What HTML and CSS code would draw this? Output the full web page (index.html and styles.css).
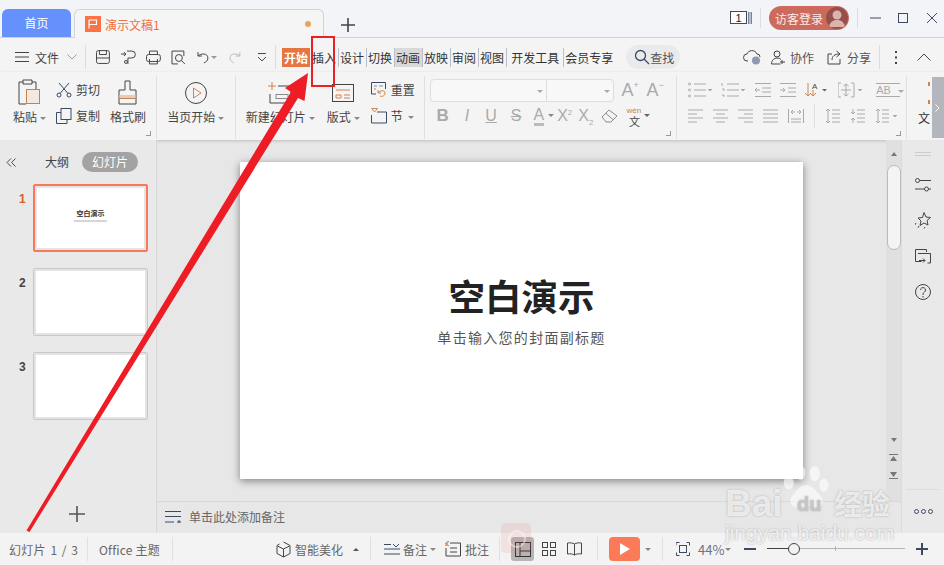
FILE: index.html
```html
<!DOCTYPE html>
<html lang="zh-CN">
<head>
    <meta charset="UTF-8">
    <title>演示文稿1</title>
    <link rel="stylesheet" href="styles.css">
</head>
<body>
    <div class="titlebar">
        <div class="tab-home">首页</div>
        <div class="tab-doc">
            <span class="doc-logo"><svg width="10" height="10" viewBox="0 0 10 10"><path d="M1 1h7.5v4.5H1M1 1v8.5" fill="none" stroke="#fff" stroke-width="1.2"/></svg></span>
            <span class="doc-name">演示文稿1</span>
            <span class="doc-dot"></span>
        </div>
        <svg class="tab-add" width="14" height="14" viewBox="0 0 14 14"><path d="M7 0v14M0 7h14" stroke="#444" stroke-width="1.6"/></svg>
        <div class="title-right">
            <svg width="22" height="14" viewBox="0 0 22 14"><rect x=".5" y=".5" width="16" height="12" fill="#fff" stroke="#3c4a66"/><text x="8.500" y="11" text-anchor="middle" font-size="11" font-family="Liberation Sans" fill="#222">1</text><path d="M18.500 1v12M20 1v12M21.500 1v12" stroke="#7b8496"/></svg>
            <span class="vsep first"></span>
            <div class="login">访客登录<span class="avatar"><svg width="22" height="22" viewBox="0 0 22 22"><circle cx="11" cy="8" r="4.500" fill="#dcb4ae"/><path d="M3 20c1-6 5-7 8-7s7 1 8 7z" fill="#dcb4ae"/></svg></span></div>
            <span class="vsep second"></span>
            <svg class="win-btn" width="14" height="14" viewBox="0 0 14 14"><path d="M0 7h11" stroke="#3c4a66"/></svg>
            <svg class="win-btn" width="14" height="14" viewBox="0 0 14 14"><rect x=".5" y="2.500" width="9" height="9" fill="none" stroke="#3c4a66"/></svg>
            <svg class="win-btn" width="14" height="14" viewBox="0 0 14 14"><path d="M1 2l10 10M11 2L1 12" stroke="#3c4a66"/></svg>
        </div>
    </div>

    <div class="menubar">
        <svg class="mi-burger" width="14" height="10" viewBox="0 0 14 10"><path d="M0 .5h14M0 5h14M0 9.500h14" stroke="#444"/></svg>
        <span class="file-label">文件</span>
        <svg class="mi-chev" width="10" height="6" viewBox="0 0 10 6"><path d="M.5.5L5 5 9.500.5" fill="none" stroke="#999"/></svg>
        <span class="menu-sep"></span>
        <div class="quick">
            <svg width="15" height="15" viewBox="0 0 15 15" fill="none" stroke="#444"><rect x=".5" y=".5" width="13" height="13" rx="2"/><path d="M3.500.5v4h7v-4M.5 8h13"/></svg>
            <svg width="15" height="15" viewBox="0 0 15 15" fill="none" stroke="#444"><path d="M0 4h5M3 2l2 2-2 2M6 1h5a3 3 0 0 1 0 7H7v6"/><circle cx="5" cy="12" r="1.500"/></svg>
            <svg width="15" height="15" viewBox="0 0 15 15" fill="none" stroke="#444"><rect x=".5" y="4.500" width="14" height="7" rx="2"/><path d="M3.500 4.500V1h8v3.500M3.500 9v5h8V9"/></svg>
            <svg width="15" height="15" viewBox="0 0 15 15" fill="none" stroke="#444"><path d="M13 6V1H1v13h6"/><circle cx="8" cy="8" r="3.500"/><path d="M10.500 10.500l3.500 3.500"/></svg>
            <svg class="undo" width="13" height="13" viewBox="0 0 13 13" fill="none" stroke="#444"><path d="M1 1v4h4M1 5c3-3 10-3 10 2 0 3-2 4-4 5"/></svg>
            <span class="caret gap-small"></span>
            <svg class="redo" width="13" height="13" viewBox="0 0 13 13" fill="none" stroke="#bbb"><path d="M12 1v4H8M12 5C9 2 2 2 2 7c0 3 2 4 4 5"/></svg>
            <svg class="more" width="10" height="9" viewBox="0 0 10 9" fill="none" stroke="#444"><path d="M1 .5h8M1 4l4 4 4-4"/></svg>
        </div>
        <span class="menu-sep"></span>
        <div class="tabs">
            <span class="tab is-start">开始</span>
            <span class="tab">插入</span>
            <span class="tab">设计</span>
            <span class="tab">切换</span>
            <span class="tab is-hover">动画</span>
            <span class="tab">放映</span>
            <span class="tab">审阅</span>
            <span class="tab">视图</span>
            <span class="tab is-wide">开发工具</span>
            <span class="tab is-last">会员专享</span>
        </div>
        <div class="find">
            <svg width="16" height="16" viewBox="0 0 16 16" fill="none" stroke="#3c4a66" stroke-width="1.300"><circle cx="6.500" cy="6.500" r="5"/><path d="M10 10l5 5"/></svg>
            查找
        </div>
        <div class="menu-right">
            <svg class="cloud" width="18" height="16" viewBox="0 0 18 16"><path d="M5 12H4a3.500 3.500 0 0 1 0-7c1-4 8-5 10 0a3 3 0 0 1 3 3" fill="none" stroke="#444"/><circle cx="13" cy="11.500" r="4" fill="#8d9ab3"/></svg>
            <svg class="collab" width="15" height="15" viewBox="0 0 15 15" fill="none" stroke="#444"><circle cx="6" cy="4" r="3"/><path d="M.5 14c0-4 3-6 5.500-6 1.500 0 3 .5 4 1.500M.5 14h9M11 10v4M9 12h5"/></svg>
            <span class="mr-text">协作</span>
            <svg class="share" width="16" height="15" viewBox="0 0 16 15" fill="none" stroke="#444"><path d="M5 4H1v10h12V9M5 10c0-4 3-6 7-6M9.500 1L13 4l-3.500 3"/></svg>
            <span class="mr-text">分享</span>
            <span class="menu-sep"></span>
            <svg class="dots" width="3" height="13" viewBox="0 0 3 13" fill="#444"><rect y="0" width="2" height="2"/><rect y="5.500" width="2" height="2"/><rect y="11" width="2" height="2"/></svg>
            <svg class="chev-up" width="14" height="8" viewBox="0 0 14 8"><path d="M.5 7.500L7 1l6.500 6.500" fill="none" stroke="#444"/></svg>
        </div>
    </div>

    <div class="ribbon">
        <div class="rgroup g-clip">
            <div class="big paste">
                <svg width="24" height="28" viewBox="0 0 24 28" fill="none"><path d="M5 3H1v22h7" stroke="#444"/><path d="M5 1h9v4H5zM14 3h4v7" stroke="#444"/><rect x="8.500" y="10.500" width="13" height="14" fill="#f3e9e1" stroke="#c9824f"/></svg>
                <span class="lbl">粘贴<i class="caret"></i></span>
            </div>
            <div class="pair">
                <div class="small">
                    <svg width="16" height="16" viewBox="0 0 16 16" fill="none" stroke="#3c4a66"><circle cx="3" cy="13" r="2"/><circle cx="13" cy="13" r="2"/><path d="M4 11.500L13 1M12 11.500L3 1"/></svg>
                    <span>剪切</span>
                </div>
                <div class="small">
                    <svg width="16" height="16" viewBox="0 0 16 16" fill="none" stroke="#3c4a66"><rect x="5" y=".5" width="10" height="11"/><path d="M5 4.500H.5v11H11v-4"/></svg>
                    <span>复制</span>
                </div>
            </div>
            <div class="big brush">
                <svg width="20" height="26" viewBox="0 0 20 26" fill="none"><path d="M7 1h5v9h6v14H1V10h6z" stroke="#444"/><rect x="1.500" y="15" width="16" height="3" fill="#e5cdb9"/><path d="M1 18.500h17" stroke="#c9824f"/></svg>
                <span class="lbl">格式刷</span>
            </div>
            <span class="launcher"></span>
        </div>
        <div class="rgroup g-play">
            <div class="big">
                <svg width="24" height="24" viewBox="0 0 24 24" fill="none"><circle cx="12" cy="12" r="10.500" stroke="#444"/><path d="M9.500 7l7.500 5-7.500 5z" stroke="#d2824c"/></svg>
                <span class="lbl">当页开始<i class="caret"></i></span>
            </div>
        </div>
        <div class="rgroup g-slide">
            <div class="big new-slide">
                <svg width="24" height="22" viewBox="0 0 24 22" fill="none"><path d="M4 0v8M0 4h8" stroke="#d2824c"/><path d="M10 4h13v17H2v-9" stroke="#444"/><rect x="8" y="12.500" width="12" height="4" stroke="#8a8a8a"/></svg>
                <span class="lbl">新建幻灯片<i class="caret"></i></span>
            </div>
            <div class="big layout">
                <svg width="22" height="18" viewBox="0 0 22 18" fill="none"><rect x=".5" y=".5" width="21" height="17" stroke="#444"/><path d="M4 6h14M4 11h5v3H4zM12 11h6M12 14h6" stroke="#d2824c"/></svg>
                <span class="lbl">版式<i class="caret"></i></span>
            </div>
            <div class="pair">
                <div class="small">
                    <svg width="16" height="16" viewBox="0 0 16 16" fill="none"><path d="M5 12H.5V.5h14V7" stroke="#3c4a66"/><path d="M3 4h3M8 4h4M3 7h2" stroke="#8a8a8a"/><path d="M7 11c2-3 7-3 7 0s-3 4-5 3M7 8v3h3" stroke="#d2824c"/></svg>
                    <span>重置</span>
                </div>
                <div class="small">
                    <svg width="16" height="16" viewBox="0 0 16 16" fill="none"><path d="M.5.5h6L3.500 4z" stroke="#d2824c"/><path d="M6 4h9.500v11H.5V7" stroke="#3c4a66"/></svg>
                    <span>节<i class="caret"></i></span>
                </div>
            </div>
        </div>
        <div class="rgroup g-font">
            <div class="frow combos">
                <div class="combo combo-name"><i class="caret"></i></div>
                <div class="combo combo-size"><i class="caret"></i></div>
                <span class="glyph grow-a">A<sup>+</sup></span>
                <span class="glyph grow-a">A<sup>−</sup></span>
            </div>
            <div class="frow font-row">
                <span class="fb bold">B</span>
                <span class="fb ital">I</span>
                <span class="fb under">U</span>
                <span class="fb strike">S</span>
                <span class="fb color">A<i class="caret"></i></span>
                <span class="fb script">X<sup>2</sup></span>
                <span class="fb script">X<sub>2</sub></span>
                <svg class="eraser" width="17" height="14" viewBox="0 0 17 14" fill="none" stroke="#8a8a8a"><path d="M1 8l7-7 8 6-6 6H5zM5 4.500l7 6"/></svg>
                <span class="wen"><b>wén</b>文<i class="caret"></i></span>
            </div>
            <span class="launcher"></span>
        </div>
        <div class="rgroup g-para">
            <div class="frow para-top">
                <svg width="24" height="16" viewBox="0 0 24 16" fill="none" stroke="#aaa"><path d="M6 2h12M6 8h12M6 14h12"/><circle cx="1.500" cy="2" r="1"/><circle cx="1.500" cy="8" r="1"/><circle cx="1.500" cy="14" r="1"/><path d="M20 7l2 2 2-2" fill="#aaa"/></svg>
                <svg width="24" height="16" viewBox="0 0 24 16" fill="none" stroke="#aaa"><path d="M6 2h12M6 8h12M6 14h12M1 1v3M1 7h2v2M1 13h2v2"/><path d="M20 7l2 2 2-2" fill="#aaa"/></svg>
                <svg width="16" height="16" viewBox="0 0 16 16" fill="none" stroke="#aaa"><path d="M0 1.500h16M7 6h9M7 10h9M0 14.500h16M5 8H0M2 6L0 8l2 2"/></svg>
                <svg width="16" height="16" viewBox="0 0 16 16" fill="none" stroke="#aaa"><path d="M0 1.500h16M8 6h8M8 10h8M0 14.500h16M0 8h5M3 6l2 2-2 2"/></svg>
                <svg width="24" height="16" viewBox="0 0 24 16" fill="none"><path d="M3 1v13M0 11l3 3 3-3M8 8v6M5 11l3 3 3-3" stroke="#d2824c"/><text x="7" y="7" font-size="8" fill="#444" font-family="Liberation Sans">A</text><path d="M17 7l2.500 2.500L22 7" fill="#666"/></svg>
                <svg width="26" height="16" viewBox="0 0 26 16" fill="none" stroke="#aaa"><path d="M3 1H0v14h3M13 1h3v14h-3M8 2v12M5.500 4L8 2l2.500 2M5.500 12L8 14l2.500-2M3 8h10"/><path d="M20 7l2 2 2-2" fill="#aaa"/></svg>
                <span class="ab">AB<i class="caret"></i></span>
            </div>
            <div class="frow para-bot">
                <svg width="15" height="14" viewBox="0 0 15 14" stroke="#aaa"><path d="M0 1h15M0 5h9M0 9h15M0 13h9"/></svg>
                <svg width="15" height="14" viewBox="0 0 15 14" stroke="#aaa"><path d="M0 1h15M3 5h9M0 9h15M3 13h9"/></svg>
                <svg width="15" height="14" viewBox="0 0 15 14" stroke="#aaa"><path d="M0 1h15M6 5h9M0 9h15M6 13h9"/></svg>
                <svg width="15" height="14" viewBox="0 0 15 14" stroke="#aaa"><path d="M0 1h15M0 5h15M0 9h15M0 13h15"/></svg>
                <svg width="16" height="14" viewBox="0 0 16 14" fill="none" stroke="#aaa"><path d="M.5 0v14M15.500 0v14M3 13h10M3 10h10M3 3h4M5 1L3 3l2 2M13 3H9M11 1l2 2-2 2"/></svg>
                <span class="para-sep"></span>
                <svg width="15" height="14" viewBox="0 0 15 14" fill="none" stroke="#aaa"><path d="M3 0v14M1 2l2-2 2 2M1 12l2 2 2-2M7 1h8M7 5h8M7 9h8M7 13h8"/></svg>
                <svg width="15" height="14" viewBox="0 0 15 14" fill="none" stroke="#aaa"><path d="M3 0v5M1 3l2 2 2-2M3 14V9M1 11l2-2 2 2M7 1h8M7 5h8M7 9h8M7 13h8"/></svg>
                <svg width="23" height="14" viewBox="0 0 23 14" fill="none" stroke="#aaa"><path d="M3 0v14M1 2l2-2 2 2M1 12l2 2 2-2M7 1h7M7 5h7M7 9h7M7 13h7"/><path d="M18 6l2 2 2-2" fill="#aaa"/></svg>
            </div>
            <span class="launcher"></span>
        </div>
        <div class="rgroup g-text">
            <span class="ticks"></span>
            <span class="lbl">文</span>
        </div>
        <div class="ribbon-more"><svg width="5" height="8" viewBox="0 0 5 8"><path d="M.5.5L4 4 .5 7.500" fill="none" stroke="#fff"/></svg></div>
    </div>

    <div class="main">
        <aside class="sidebar">
            <div class="side-head">
                <svg class="collapse" width="10" height="9" viewBox="0 0 10 9"><path d="M5 .5L1 4.500l4 4M9.500.5l-4 4 4 4" fill="none" stroke="#3c4a66"/></svg>
                <span class="side-outline">大纲</span>
                <span class="side-pill">幻灯片</span>
            </div>
            <div class="thumbs">
                <div class="thumb-row">
                    <span class="num is-current">1</span>
                    <div class="thumb is-current">
                        <div class="thumb-title">空白演示</div>
                        <div class="thumb-sub"></div>
                    </div>
                </div>
                <div class="thumb-row">
                    <span class="num">2</span>
                    <div class="thumb"></div>
                </div>
                <div class="thumb-row">
                    <span class="num">3</span>
                    <div class="thumb"></div>
                </div>
            </div>
            <svg class="add-slide" width="16" height="16" viewBox="0 0 16 16"><path d="M8 0v16M0 8h16" stroke="#555" stroke-width="1.600"/></svg>
        </aside>

        <div class="center">
            <div class="work">
                <div class="canvas">
                    <div class="slide">
                        <h1>空白演示</h1>
                        <p>单击输入您的封面副标题</p>
                    </div>
                </div>
                <div class="vscroll">
                    <span class="tri tri-up"></span>
                    <div class="thumb-bar"></div>
                    <div class="scroll-end">
                        <span class="tri tri-down"></span>
                        <svg width="9" height="10" viewBox="0 0 9 10" fill="#777"><path d="M0 1h9v1H0zM4.500 3L8 8H1z"/></svg>
                        <svg width="9" height="10" viewBox="0 0 9 10" fill="#777"><path d="M1 2h7L4.500 7zM0 8h9v1H0z"/></svg>
                    </div>
                </div>
            </div>
            <div class="notes">
                <svg width="16" height="12" viewBox="0 0 16 12" fill="none" stroke="#3c4a66"><path d="M0 .5h16M0 5.500h16M0 11h9M12 11h4M14 9v4"/></svg>
                <span>单击此处添加备注</span>
            </div>
        </div>

        <aside class="rail">
            <span class="grip"></span>
            <svg width="16" height="14" viewBox="0 0 16 14" fill="none" stroke="#444"><circle cx="2.500" cy="2.500" r="2"/><path d="M4.500 2.500H16M0 11h9"/><circle cx="11.500" cy="11" r="2"/><path d="M13.500 11H16"/></svg>
            <svg width="16" height="17" viewBox="0 0 16 17" fill="none" stroke="#444"><path d="M9 .5l2 4.500 4.500.5-3.500 3 1 4.500L9 11l-4 2.500 1-4.500-3-3 4.500-.5z"/><path d="M1 11l-1 2M4 14l-1.500 2.500M10 15l-1 1.500" stroke-dasharray="2 1"/></svg>
            <svg width="16" height="15" viewBox="0 0 16 15" fill="none" stroke="#444"><path d="M11.500 3V.5H.5v12h6M3 4.500h12.500v9.500h-3M4 11.500h6M8 9.500l2 2-2 2"/></svg>
            <svg width="16" height="16" viewBox="0 0 16 16" fill="none" stroke="#444"><circle cx="8" cy="8" r="7.500"/><path d="M5.500 6a2.500 2.500 0 1 1 3.800 2.200C8.400 8.800 8 9.500 8 11M8 12v1.500"/></svg>
            <div class="rail-foot"><i></i><i></i><i></i></div>
        </aside>
    </div>

    <div class="statusbar">
        <span class="st-item st-count">幻灯片 1 / 3</span>
        <span class="st-sep"></span>
        <span class="st-item st-theme">Office 主题</span>
        <span class="st-sep"></span>
        <div class="st-beauty">
            <svg width="15" height="17" viewBox="0 0 15 17" fill="none" stroke="#444"><path d="M7.500 1L14 4.500v8L7.500 16 1 12.500v-8L3.500 3M7.500 8v8M1.500 5l6 3 6-3"/></svg>
            <span>智能美化</span>
            <i class="caret-up"></i>
        </div>
        <span class="st-sep"></span>
        <div class="st-notes">
            <svg width="16" height="12" viewBox="0 0 16 12" fill="none" stroke="#3c4a66"><path d="M0 1.500h7M0 6h16M0 11h16M9 1l3 3 3-3"/></svg>
            <span>备注</span><i class="caret"></i>
            <svg class="comment" width="16" height="16" viewBox="0 0 16 16" fill="none"><path d="M5 2h10.500v13H1V7" stroke="#444"/><path d="M5 7h7M5 11h7" stroke="#444"/><path d="M0 2l4 3M4 0L0 5M2 0v5" stroke="#d2824c"/></svg>
            <span class="comment-label">批注</span>
        </div>
        <span class="st-sep"></span>
        <div class="views">
            <span class="view is-active"><svg width="16" height="15" viewBox="0 0 16 15" fill="none" stroke="#333"><rect x=".5" y=".5" width="15" height="14"/><path d="M5 .5v14M5 9h10.500"/></svg></span>
            <span class="view"><svg width="14" height="14" viewBox="0 0 14 14" fill="none" stroke="#444"><rect x=".5" y=".5" width="5" height="5"/><rect x="8.500" y=".5" width="5" height="5"/><rect x=".5" y="8.500" width="5" height="5"/><rect x="8.500" y="8.500" width="5" height="5"/></svg></span>
            <span class="view"><svg width="15" height="14" viewBox="0 0 15 14" fill="none" stroke="#444"><path d="M7.500 2C6 1 3 .5.500 1v11c3-.5 5.500 0 7 1 1.500-1 4-1.500 7-1V1c-2.500-.5-5.500 0-7 1zM7.500 2v11"/></svg></span>
        </div>
        <span class="st-sep"></span>
        <span class="play"><svg width="12" height="14" viewBox="0 0 12 14"><path d="M1 1l10 6-10 6z" fill="#fff"/></svg></span>
        <i class="caret play-caret"></i>
        <span class="st-sep"></span>
        <svg class="fit" width="14" height="14" viewBox="0 0 14 14" fill="none" stroke="#3c4a66"><path d="M0 3.500V.5h3.500M10.500.5H13.500v3M13.500 10.500v3h-3M3.500 13.500H.5v-3"/><rect x="3.500" y="3.500" width="7" height="7"/></svg>
        <span class="zoom-val">44%</span><i class="caret"></i>
        <svg class="zoom-minus" width="12" height="2" viewBox="0 0 12 2"><path d="M0 1h12" stroke="#3c4a66" stroke-width="2"/></svg>
        <div class="slider"><span class="slider-fill"></span><span class="slider-tick"></span><span class="knob"></span></div>
        <svg class="zoom-plus" width="12" height="12" viewBox="0 0 12 12"><path d="M6 0v12M0 6h12" stroke="#3c4a66" stroke-width="2"/></svg>
    </div>

    <!-- pasted on top of the screenshot -->
    <div class="pink-badge"></div>
    <div class="mark">
        <svg class="paw" width="52" height="49" viewBox="0 0 62 58" fill="#fff" fill-opacity=".6"><ellipse cx="8" cy="21" rx="6" ry="8"/><ellipse cx="22" cy="9" rx="6" ry="8.500"/><ellipse cx="39" cy="10" rx="6" ry="9"/><ellipse cx="50" cy="24" rx="5.500" ry="8"/><path d="M29 24c8 0 12 8 17 13 6 7 1 14-7 13-6-1-14-1-20 0-8 1-12-7-7-13 5-5 8-13 17-13z"/></svg>
        <span class="mark-bai">Bai</span>
        <span class="mark-du">du</span>
        <span class="mark-cn">经验</span>
        <span class="mark-url">jingyan.baidu.com</span>
    </div>
    <div class="red-box"></div>
    <svg class="red-arrow" width="944" height="565" viewBox="0 0 944 565"><path d="M26.500 530.500l3 1.500L298 98l6.500 3 3.500-28-23 15 6 4z" fill="#ee1c25"/></svg>
</body>
</html>
```
FILE: styles.css
```css
* {
  box-sizing: border-box;
}

body {
  margin: 0;
  width: 944px;
  height: 565px;
  overflow: hidden;
  position: relative;
  display: flex;
  flex-direction: column;
  font-family: "Noto Sans CJK SC", "Liberation Sans", sans-serif;
  font-size: 12px;
  color: #444;
  background: #e7e7e7;
}

i {
  font-style: normal;
}

.caret {
  display: inline-block;
  width: 0;
  height: 0;
  margin-left: 3px;
  vertical-align: middle;
  border-left: 3px solid transparent;
  border-right: 3px solid transparent;
  border-top: 3px solid #888;
}

/* title bar */
.titlebar {
  height: 38px;
  flex: none;
  padding: 9px 4px 0 2px;
  display: flex;
  align-items: flex-start;
  background: #f3f4f8;
  border-bottom: 1px solid #cfd2da;
}

.tab-home {
  width: 69px;
  height: 28px;
  background: #6491fb;
  color: #fff;
  border-radius: 6px 6px 0 0;
  text-align: center;
  line-height: 28px;
}

.tab-doc {
  width: 250px;
  height: 29px;
  margin-left: 3px;
  padding: 0 12px 0 10px;
  display: flex;
  align-items: center;
  background: #f5f5f5;
  border: 1px solid #d0d3da;
  border-bottom: none;
  border-radius: 6px 6px 0 0;
}

.doc-logo {
  width: 16px;
  height: 16px;
  background: #fb7345;
  display: flex;
  align-items: center;
  justify-content: center;
}

.doc-name {
  margin-left: 4px;
  flex: 1;
  color: #f0703f;
}

.doc-dot {
  width: 6px;
  height: 6px;
  border-radius: 50%;
  background: #e8a35c;
}

.tab-add {
  margin: 9px 0 0 17px;
}

.title-right {
  margin-left: auto;
  margin-top: -3px;
  height: 24px;
  display: flex;
  align-items: center;
}

.vsep {
  width: 1px;
  height: 20px;
  background: #dcdde2;
}

.vsep.first {
  margin: 0 8px 0 8px;
}

.vsep.second {
  margin: 0 12px 0 8px;
}

.login {
  width: 80px;
  height: 24px;
  padding: 0 1px 0 6px;
  display: flex;
  align-items: center;
  justify-content: space-between;
  background: #cd6a5e;
  border-radius: 12px;
  color: #fbecea;
}

.avatar {
  width: 22px;
  height: 22px;
  border-radius: 50%;
  background: #95504a;
  overflow: hidden;
}

.avatar svg {
  display: block;
}

.win-btn {
  margin-right: 14px;
}

.win-btn:last-child {
  margin-right: 0;
}

/* menu bar */
.menubar {
  height: 34px;
  flex: none;
  padding: 4px 13px 0 15px;
  display: flex;
  align-items: center;
  background: #f4f4f4;
}

.file-label {
  margin-left: 6px;
}

.mi-chev {
  margin-left: 8px;
}

.menu-sep {
  width: 1px;
  height: 24px;
  margin: 0 7px 0 8px;
  background: #dcdcdc;
}

.quick {
  width: 174px;
  padding-left: 3px;
  display: flex;
  align-items: center;
  gap: 10px;
}

.quick .undo {
  margin-left: 2px;
}

.quick .gap-small {
  margin-left: -9px;
  border-top-color: #999;
}

.quick .redo {
  margin-left: 1px;
}

.quick .more {
  margin-left: 6px;
}

.tabs {
  display: flex;
  align-items: center;
  margin-left: -1px;
}

.tab {
  height: 19px;
  padding: 0 2px 0 1px;
  line-height: 19px;
  color: #333;
  white-space: nowrap;
  border-right: 1px solid #b8c0d0;
}

.tab.is-start {
  width: 28px;
  padding: 0 2px;
  border: none;
  margin-right: 1px;
  background: #e6763f;
  color: #fff;
  font-weight: 700;
}

.tab.is-hover {
  background: #d9d9d9;
}

.tab.is-wide {
  padding-left: 4px;
  padding-right: 4px;
}

.tab.is-last {
  border: none;
  padding-left: 1px;
}

.find {
  width: 54px;
  height: 24px;
  margin-left: 11px;
  padding-left: 8px;
  display: flex;
  align-items: center;
  background: #e9eaec;
  border-radius: 12px;
  color: #555;
}

.menu-right {
  margin-left: auto;
  display: flex;
  align-items: center;
}

.collab {
  margin-left: 10px;
}

.share {
  margin-left: 13px;
}

.mr-text {
  margin-left: 4px;
  color: #555;
}

.menu-right .menu-sep {
  margin: 0 15px 0 8px;
}

.chev-up {
  margin-left: 19px;
}

/* ribbon */
.ribbon {
  height: 68px;
  flex: none;
  display: flex;
  background: #f4f4f4;
  box-shadow: 0 1px 3px rgba(0, 0, 0, .18);
  position: relative;
}

.rgroup {
  position: relative;
  height: 63px;
  margin-top: 4px;
  border-right: 1px solid #e0e0e0;
  display: flex;
}

.launcher {
  position: absolute;
  right: 5px;
  bottom: 3px;
  width: 5px;
  height: 5px;
  border-right: 1px solid #999;
  border-bottom: 1px solid #999;
}

.big {
  display: flex;
  flex-direction: column;
  align-items: center;
}

.big svg {
  height: 30px;
  flex: none;
  padding-top: 2px;
  box-sizing: content-box;
}

.lbl {
  line-height: 16px;
  white-space: nowrap;
  margin-top: 1px;
}

.pair {
  display: flex;
  flex-direction: column;
  gap: 9px;
  padding-top: 5px;
}

.small {
  height: 17px;
  display: flex;
  align-items: center;
  gap: 4px;
}

.g-clip {
  width: 157px;
  padding-left: 12px;
}

.paste {
  width: 35px;
}

.g-clip .pair {
  margin-left: 9px;
}

.brush {
  margin-left: 10px;
}

.g-play {
  width: 79px;
  justify-content: center;
}

.g-slide {
  width: 189px;
  padding-left: 10px;
}

.layout {
  margin-left: 12px;
}

.g-slide .pair {
  margin-left: 11px;
}

.g-slide .pair .small .caret {
  margin-left: 5px;
}

.g-font {
  width: 253px;
  padding: 2px 0 0 5px;
  flex-direction: column;
}

.frow {
  display: flex;
  align-items: center;
}

.combos {
  height: 24px;
}

.combo {
  height: 23px;
  background: #f8f8f8;
  border: 1px solid #ddd;
  position: relative;
}

.combo .caret {
  position: absolute;
  right: 3px;
  top: 10px;
  border-top-color: #aaa;
}

.combo-name {
  width: 117px;
  border-radius: 4px 0 0 4px;
}

.combo-size {
  width: 68px;
  margin-left: -1px;
  border-radius: 0 4px 4px 0;
}

.glyph {
  font-family: "Liberation Sans", sans-serif;
  font-size: 18px;
  color: #aaa;
  width: 25px;
  margin-left: 0;
  white-space: nowrap;
  line-height: 24px;
}

.glyph:nth-child(3) {
  margin-left: 8px;
}

.glyph sup {
  font-size: 9px;
  vertical-align: 8px;
  line-height: 0;
}

.font-row {
  margin-top: 2px;
  height: 24px;
  font-family: "Liberation Sans", sans-serif;
  color: #aaa;
}

.fb {
  font-size: 16px;
  white-space: nowrap;
}

.fb.bold {
  font-weight: 700;
  margin-left: 7px;
  font-size: 17px;
}

.fb.ital {
  font-style: italic;
  margin-left: 16px;
}

.fb.under {
  text-decoration: underline;
  margin-left: 16px;
}

.fb.strike {
  text-decoration: line-through;
  margin-left: 14px;
}

.fb.color {
  margin-left: 12px;
  border-bottom: 3px solid #bbb;
  line-height: 16px;
}

.fb.color .caret {
  margin-left: 4px;
  margin-right: -10px;
}

.fb.script {
  margin-left: 13px;
}

.fb.script + .fb.script {
  margin-left: 6px;
}

.fb sup,
.fb sub {
  font-size: 8px;
  line-height: 0;
}

.eraser {
  margin-left: 8px;
}

.wen {
  margin-left: 8px;
  position: relative;
  width: 16px;
  padding-top: 11px;
  font-family: "Noto Sans CJK SC", sans-serif;
  font-size: 11px;
  line-height: 11px;
  color: #444;
  text-align: center;
}

.wen b {
  position: absolute;
  top: 2px;
  left: 0;
  font-family: "Liberation Sans", sans-serif;
  font-size: 8px;
  font-weight: 400;
  line-height: 8px;
  color: #c9824f;
}

.wen .caret {
  position: absolute;
  left: 18px;
  top: 9px;
  margin: 0;
  border-top-color: #666;
}

.g-para {
  width: 230px;
  padding: 5px 0 0 11px;
  flex-direction: column;
}

.para-top {
  height: 18px;
  gap: 9px;
}

.para-top svg:nth-child(3) {
  margin-left: 1px;
}

.ab {
  margin-left: 3px;
  font-family: "Liberation Sans", sans-serif;
  font-size: 11px;
  color: #aaa;
  border-top: 1px solid #aaa;
  border-bottom: 1px solid #aaa;
  line-height: 12px;
  white-space: nowrap;
}

.ab .caret {
  position: relative;
  left: 4px;
  border-top-color: #aaa;
}

.para-bot {
  margin-top: 8px;
  height: 18px;
  gap: 10px;
}

.para-sep {
  width: 1px;
  height: 24px;
  background: #dedede;
}

.g-text {
  width: 25px;
  border: none;
  padding: 33px 0 0 11px;
  flex-direction: column;
  color: #333;
}

.ticks {
  position: absolute;
  left: 21px;
  top: 6px;
  width: 2px;
  height: 22px;
  border-top: 4px solid #d2824c;
  border-bottom: 4px solid #d2824c;
}

.ribbon-more {
  width: 12px;
  margin: 5px 0 2px;
  display: flex;
  align-items: center;
  justify-content: center;
  background: #b4b6bd;
}

/* main area */
.main {
  flex: 1;
  min-height: 0;
  display: flex;
}

.sidebar {
  width: 157px;
  flex: none;
  background: #e9e9e9;
  border-right: 1px solid #d8d8d8;
  position: relative;
}

.side-head {
  height: 44px;
  padding: 12px 0 0 6px;
  display: flex;
  align-items: flex-start;
}

.collapse {
  margin-top: 6px;
}

.side-outline {
  margin-left: 29px;
  line-height: 20px;
}

.side-pill {
  width: 56px;
  height: 20px;
  margin-left: 13px;
  text-align: center;
  line-height: 20px;
  color: #fff;
  background: #a3a3a3;
  border-radius: 10px;
}

.thumbs {
  display: flex;
  flex-direction: column;
  gap: 16px;
}

.thumb-row {
  display: flex;
  padding-left: 19px;
}

.num {
  width: 14px;
  line-height: 28px;
  height: 28px;
  margin-top: 1px;
  font-family: "Liberation Sans", sans-serif;
  font-size: 12px;
  font-weight: 700;
  color: #444;
}

.num.is-current {
  color: #d9601c;
}

.thumb {
  width: 115px;
  height: 68px;
  padding-top: 26px;
  background: #fff;
  border: 1px solid #c8c8c8;
  box-shadow: inset 0 0 0 2px #e4e4e4;
  border-radius: 2px;
}

.thumb.is-current {
  border: 2px solid #f9785a;
  padding-top: 23px;
}

.thumb-title {
  text-align: center;
  font-size: 7px;
  font-weight: 700;
  line-height: 9px;
  color: #333;
}

.thumb-sub {
  width: 33px;
  height: 2px;
  margin: 2px auto 0;
  background: #d6d6da;
}

.add-slide {
  position: absolute;
  left: 69px;
  bottom: 11px;
}

.center {
  flex: 1;
  min-width: 0;
  display: flex;
  flex-direction: column;
}

.work {
  flex: 1;
  min-height: 0;
  display: flex;
}

.canvas {
  flex: 1;
  padding: 22px 0 0 83px;
}

.slide {
  width: 563px;
  height: 317px;
  padding-top: 110px;
  background: #fff;
  box-shadow: 0 2px 8px rgba(0, 0, 0, .45);
  text-align: center;
}

.slide h1 {
  margin: 0;
  font-size: 36.500px;
  line-height: 48px;
  font-weight: 700;
  color: #222;
}

.slide p {
  margin: 7px 0 0;
  font-size: 14px;
  line-height: 20px;
  letter-spacing: 1.3px;
  color: #555;
}

.vscroll {
  width: 15px;
  flex: none;
  position: relative;
  display: flex;
  flex-direction: column;
  align-items: center;
  background: #e0e0e0;
}

.tri {
  width: 0;
  height: 0;
  border-left: 3px solid transparent;
  border-right: 3px solid transparent;
}

.tri-up {
  margin-top: 12px;
  border-bottom: 4px solid #777;
}

.tri-down {
  margin-bottom: 4px;
  border-top: 4px solid #777;
}

.thumb-bar {
  width: 14px;
  height: 85px;
  margin-top: 9px;
  background: #f4f4f4;
  border: 1px solid #bbb;
  border-radius: 7px;
}

.scroll-end {
  margin-top: auto;
  margin-bottom: 21px;
  display: flex;
  flex-direction: column;
  align-items: center;
  gap: 7px;
}

.notes {
  height: 32px;
  flex: none;
  padding: 0 0 2px 8px;
  display: flex;
  align-items: center;
  gap: 8px;
  color: #666;
  background: #e7e7e7;
  border-top: 1px solid #d8d8d8;
}

.rail {
  width: 43px;
  flex: none;
  padding: 12px 0 0;
  position: relative;
  display: flex;
  flex-direction: column;
  align-items: center;
  gap: 20px;
  background: #e9e9e9;
  border-left: 1px solid #dcdcdc;
}

.grip {
  width: 16px;
  height: 4px;
  margin-bottom: 2px;
  border-top: 1px solid #ccc;
  border-bottom: 1px solid #ccc;
}

.rail-foot {
  position: absolute;
  left: 4px;
  right: 4px;
  bottom: 0;
  height: 44px;
  display: flex;
  justify-content: center;
  align-items: center;
  gap: 2px;
  border-top: 1px solid #dcdcdc;
}

.rail-foot i {
  width: 5px;
  height: 5px;
  border: 1px solid #3c4a66;
  border-radius: 50%;
}

/* status bar */
.statusbar {
  height: 32px;
  flex: none;
  padding-left: 9px;
  display: flex;
  align-items: center;
  background: #f3f3f3;
  color: #666;
}

.st-sep {
  width: 1px;
  height: 24px;
  margin: 0 11px;
  background: #e0e0e0;
  flex: none;
}

.st-item {
  white-space: nowrap;
}

.st-count {
  width: 67px;
  word-spacing: 1.5px;
  letter-spacing: .3px;
}

.st-theme {
  width: 62px;
  letter-spacing: .2px;
}

.st-beauty {
  margin-left: 92px;
  display: flex;
  align-items: center;
  gap: 4px;
}

.caret-up {
  width: 0;
  height: 0;
  margin-left: 6px;
  border-left: 3px solid transparent;
  border-right: 3px solid transparent;
  border-bottom: 3px solid #555;
}

.st-notes {
  margin-left: 2px;
  display: flex;
  align-items: center;
}

.st-notes span {
  margin-left: 3px;
}

.st-notes .comment {
  margin-left: 9px;
}

.st-notes .comment-label {
  margin: 0 -1px 0 4px;
}

.views {
  display: flex;
  align-items: center;
  gap: 3px;
}

.view {
  width: 23px;
  height: 24px;
  display: flex;
  align-items: center;
  justify-content: center;
  border-radius: 3px;
}

.view.is-active {
  background: #b5b5b5;
}

.play {
  width: 31px;
  height: 24px;
  display: flex;
  align-items: center;
  justify-content: center;
  background: #fb7a58;
  border-radius: 4px;
}

.play-caret {
  margin-left: 5px;
}

.fit {
  margin-left: 2px;
}

.zoom-val {
  width: 24px;
  margin-left: 8px;
  font-size: 13px;
  color: #6b7385;
}

.zoom-minus {
  margin-left: 13px;
}

.slider {
  width: 138px;
  height: 12px;
  margin-left: 11px;
  position: relative;
  flex: none;
}

.slider-fill {
  position: absolute;
  left: 0;
  top: 5px;
  width: 138px;
  height: 1px;
  background: #b5b5b5;
}

.slider-fill::before {
  content: "";
  position: absolute;
  left: 0;
  top: 0;
  width: 24px;
  height: 1px;
  background: #444;
}

.slider-tick {
  position: absolute;
  left: 68px;
  top: 3px;
  width: 1px;
  height: 5px;
  background: #b5b5b5;
}

.knob {
  position: absolute;
  left: 21px;
  top: 0;
  width: 12px;
  height: 12px;
  border: 1px solid #444;
  border-radius: 50%;
  background: #f3f3f3;
}

.zoom-plus {
  margin-left: 11px;
}

/* things lying over the screenshot */
.pink-badge {
  position: absolute;
  left: 501px;
  top: 523px;
  width: 30px;
  height: 30px;
  border-radius: 4px;
  background: rgba(240, 100, 100, .12);
}

.pink-badge::after {
  content: "";
  position: absolute;
  left: 7px;
  top: 7px;
  width: 14px;
  height: 14px;
  border: 2px solid rgba(255, 255, 255, .45);
  border-radius: 50%;
}

.mark {
  position: absolute;
  left: 725px;
  top: 462px;
  width: 175px;
  height: 90px;
  font-family: "Liberation Sans", sans-serif;
  color: rgba(255, 255, 255, .75);
  text-shadow: 0 0 2px rgba(120, 120, 120, .6);
}

.mark span {
  position: absolute;
  white-space: nowrap;
}

.paw {
  position: absolute;
  left: 57px;
  top: 3px;
}

.mark-bai {
  left: 0;
  top: 22px;
  font-size: 37px;
  font-weight: 700;
  line-height: 40px;
}

.mark-du {
  left: 72px;
  top: 30px;
  font-size: 20px;
  font-weight: 700;
  line-height: 24px;
  color: rgba(200, 200, 200, .9);
}

.mark-cn {
  left: 109px;
  top: 23px;
  font-family: "Noto Sans CJK SC", sans-serif;
  font-size: 28px;
  font-weight: 700;
  line-height: 36px;
}

.mark-url {
  left: 0;
  top: 58px;
  font-size: 21px;
  line-height: 26px;
}

.red-box {
  position: absolute;
  left: 311px;
  top: 36px;
  width: 24px;
  height: 51px;
  border: 2px solid #ea2027;
}

.red-arrow {
  position: absolute;
  left: 0;
  top: 0;
}
```
